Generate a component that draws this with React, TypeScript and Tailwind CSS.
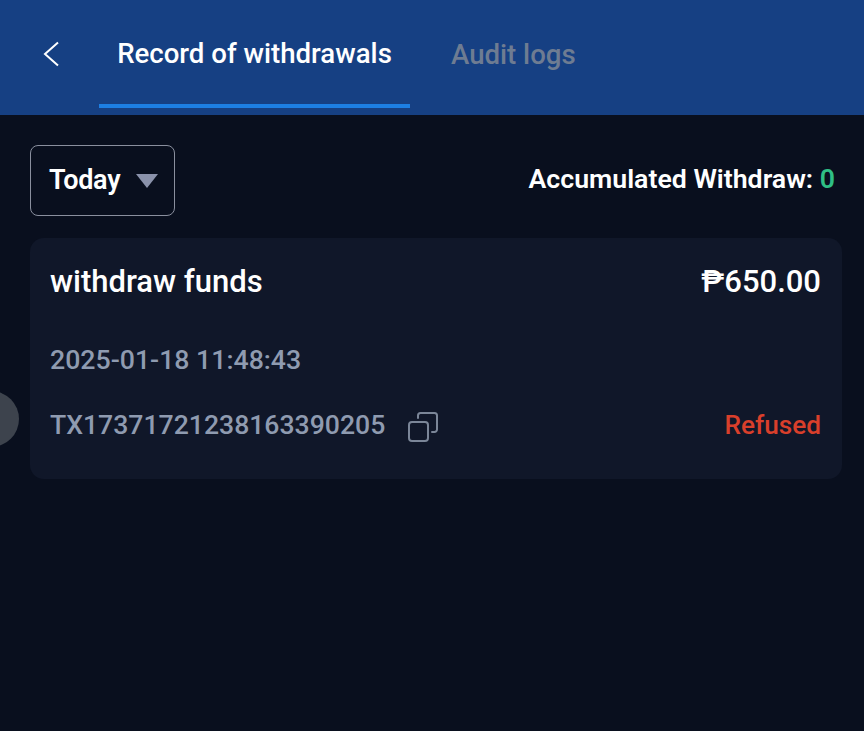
const tabClass = "flex h-full items-center justify-center text-[27.6px] font-medium";

function CopyIcon() {
  return (
    <svg width="32" height="32" viewBox="0 0 32 32" fill="none" stroke="#7b8698" strokeWidth="2" className="mt-[3px]">
      <rect x="2" y="11" width="19" height="19" rx="3" />
      <path d="M11 7V4.5A2.5 2.5 0 0 1 13.5 2H27.5A2.5 2.5 0 0 1 30 4.5V18.5A2.5 2.5 0 0 1 27.5 21H25" strokeLinecap="round" />
    </svg>
  );
}

export default function App() {
  return (
    <div className="relative min-h-[731px] w-full overflow-hidden bg-[#090f1e] font-['Roboto',sans-serif] text-white">
      <header className="flex h-[115px] items-stretch bg-[#164083]">
        <button type="button" className="flex w-[99px] shrink-0 items-center pb-[7px] pl-[43px]">
          <svg width="16" height="26" viewBox="0 0 16 26" fill="none" stroke="white" strokeWidth="2">
            <path d="M15 1.5 2 13l13 11.5" />
          </svg>
        </button>
        <div className="mb-[7px] flex w-[311px] shrink-0 items-stretch border-b-[4px] border-[#1d7fe3]">
          <div className={`${tabClass} w-full pt-[3px] text-white`}>Record of withdrawals</div>
        </div>
        <div className={`${tabClass} ml-[41px] pb-[5px] text-[#6e7c92]`}>Audit logs</div>
      </header>

      <main className="pl-[30px] pr-[22px] pt-[30px]">
        <div className="flex items-center justify-between">
          <button type="button" className="flex h-[71px] w-[145px] items-center gap-[15px] rounded-[8px] border border-[#8a8f9e] pl-[18px]">
            <span className="text-[27px] font-semibold tracking-[-0.3px]">Today</span>
            <svg width="24" height="16" viewBox="0 0 24 16" fill="#8a92ab">
              <path d="M1 1h22L12 15Z" />
            </svg>
          </button>
          <div className="pb-[2px] pr-[7px] text-[26.7px] font-semibold">
            Accumulated Withdraw: <span className="text-[#2fbf85]">0</span>
          </div>
        </div>

        <section className="mt-[22px] h-[241px] rounded-[14px] bg-[#101729] pl-[20px] pr-[21px] pt-[24px]">
          <div className="flex items-center justify-between text-[31px] font-medium leading-[40px]">
            <span>withdraw funds</span>
            <span>₱650.00</span>
          </div>
          <div className="mt-[38px] text-[26.7px] font-medium leading-[40px] text-[#8f9bb0]">2025-01-18 11:48:43</div>
          <div className="mt-[25px] flex items-center justify-between">
            <div className="flex items-center gap-[22px] text-[26.6px] font-medium leading-[40px] text-[#8f9bb0]">
              <span>TX17371721238163390205</span>
              <CopyIcon />
            </div>
            <span className="text-[26.2px] font-medium leading-[40px] text-[#d93f2b]">Refused</span>
          </div>
        </section>
      </main>

      {/* floating handle stuck to the left edge */}
      <div className="absolute left-[-37px] top-[391px] h-[56px] w-[56px] rounded-full bg-[#3d434d]" />
    </div>
  );
}
